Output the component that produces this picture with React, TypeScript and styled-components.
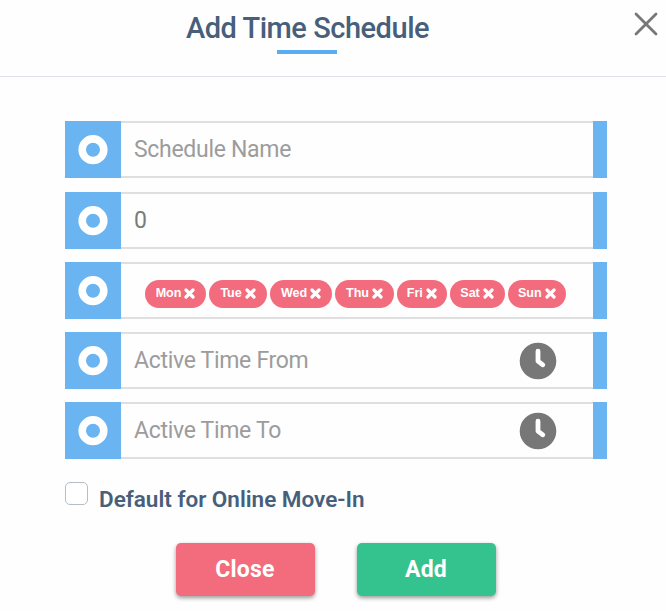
import React from "react";
import styled, { createGlobalStyle } from "styled-components";

const GlobalStyle = createGlobalStyle`
  *, *::before, *::after { box-sizing: border-box; }
  body { margin: 0; background: #fff; font-family: Roboto, sans-serif; }
`;

const Dialog = styled.section`
  width: 666px;
  height: 611px;
  overflow: hidden;
  background: #fefefe;
  color: #475f7b;
`;

const Header = styled.header`
  display: grid;
  grid-template-columns: 1fr 243px 1fr;
  height: 77px;
  padding-right: 51px;
  border-bottom: 1px solid #dfe3e7;
  position: relative;
`;

const TitleBlock = styled.div`
  grid-column: 2;
  display: flex;
  flex-direction: column;
  align-items: center;
`;

const Title = styled.h1`
  margin: 11px 0 0;
  font-size: 29px;
  font-weight: 500;
  line-height: 35px;
  letter-spacing: -0.47px;
  white-space: nowrap;
`;

const TitleRule = styled.span`
  width: 60px;
  height: 4px;
  margin: 4px 1px 0 0;
  background: #5badf2;
`;

const Dismiss = styled.button`
  position: absolute;
  top: 12px;
  right: 8px;
  display: flex;
  padding: 0;
  border: 0;
  background: none;
`;

const Fields = styled.div`
  display: flex;
  flex-direction: column;
  gap: 14px;
  margin: 44px 59px 0 65px;
`;

const Field = styled.div<{ $after?: number }>`
  display: flex;
  height: 57px;
  margin-bottom: ${(p) => p.$after ?? -1}px;
`;

const Marker = styled.div`
  display: flex;
  align-items: center;
  justify-content: center;
  width: 56px;
  background: #6ab4f1;
`;

const FieldBody = styled.div`
  display: flex;
  align-items: center;
  flex: 1;
  min-width: 0;
  border: solid #dfdfdf;
  border-width: 2px 0;
`;

const FieldEnd = styled.div`
  width: 14px;
  background: #6ab4f1;
`;

const Input = styled.input`
  flex: 1;
  min-width: 0;
  height: 100%;
  padding: 0 0 0 13px;
  border: 0;
  outline: 0;
  background: transparent;
  color: #7b7b7b;
  font: 400 23px Roboto, sans-serif;
  letter-spacing: -0.3px;
  &::placeholder { color: #9c9c9c; opacity: 1; }
`;

const ClockSlot = styled.span`
  display: flex;
  margin-right: 36px;
`;

const Tags = styled.div`
  display: flex;
  gap: 3px;
  padding: 6px 0 0 24px;
`;

const Tag = styled.span<{ $width: number }>`
  display: flex;
  align-items: center;
  justify-content: center;
  gap: 3px;
  width: ${(p) => p.$width}px;
  height: 28px;
  padding-bottom: 1px;
  border-radius: 14px;
  background: #f26c7d;
  color: #fff;
  font: 700 12.6px "Liberation Sans", Arial, sans-serif;
  letter-spacing: -0.1px;
`;

const DefaultOption = styled.label`
  display: flex;
  align-items: flex-start;
  gap: 11px;
  margin: 23px 0 0 65px;
  height: 61px;
`;

const Checkbox = styled.input`
  appearance: none;
  width: 23px;
  height: 23px;
  margin: 0;
  border: 1.5px solid #b7bdc5;
  border-radius: 5px;
  background: #fff;
`;

const OptionLabel = styled.span`
  padding-top: 3px;
  font-size: 22.5px;
  font-weight: 600;
  line-height: 28px;
  white-space: nowrap;
`;

const Actions = styled.footer`
  display: flex;
  gap: 42px;
  padding-left: 176px;
`;

const Action = styled.button<{ $color: string }>`
  width: 139px;
  height: 53px;
  padding: 0 1px 1px 0;
  border: 0;
  border-radius: 5px;
  background: ${(p) => p.$color};
  box-shadow: 0 2px 4px rgba(0, 0, 0, 0.4);
  color: #fff;
  font: 700 23px Roboto, sans-serif;
  letter-spacing: 0.2px;
`;

const Ring = () => (
  <svg width="30" height="30" viewBox="0 0 30 30">
    <circle cx="15" cy="14.7" r="10.8" fill="none" stroke="#fff" strokeWidth="7.6" />
  </svg>
);

const Clock = () => (
  <ClockSlot>
    <svg width="38" height="38" viewBox="0 0 38 38">
      <circle cx="19" cy="19" r="18.3" fill="#777" />
      <path d="M19 9.2V19.2L23.8 22.8" fill="none" stroke="#fff" strokeWidth="4.8" strokeLinecap="round" strokeLinejoin="round" />
    </svg>
  </ClockSlot>
);

const TagCross = () => (
  <svg width="11" height="12" viewBox="0 0 11 12">
    <path d="M2 3L9 10M9 3L2 10" stroke="#fff" strokeWidth="3.2" strokeLinecap="round" />
  </svg>
);

const days = [
  { name: "Mon", width: 61 },
  { name: "Tue", width: 58 },
  { name: "Wed", width: 62 },
  { name: "Thu", width: 59 },
  { name: "Fri", width: 49.5 },
  { name: "Sat", width: 55 },
  { name: "Sun", width: 58.5 },
];

function FormField({ children, after }: { children: React.ReactNode; after?: number }) {
  return (
    <Field $after={after}>
      <Marker><Ring /></Marker>
      <FieldBody>{children}</FieldBody>
      <FieldEnd />
    </Field>
  );
}

export default function App() {
  return (
    <>
      <GlobalStyle />
      <Dialog>
        <Header>
          <TitleBlock>
            <Title>Add Time Schedule</Title>
            <TitleRule />
          </TitleBlock>
          <Dismiss aria-label="Dismiss">
            <svg width="24" height="24" viewBox="0 0 24 24">
              <path d="M2 2L22 22M22 2L2 22" stroke="#777" strokeWidth="2.8" strokeLinecap="round" />
            </svg>
          </Dismiss>
        </Header>
        <Fields>
          <FormField after={0}><Input placeholder="Schedule Name" /></FormField>
          <FormField><Input defaultValue="0" /></FormField>
          <FormField>
            <Tags>
              {days.map((d) => (
                <Tag key={d.name} $width={d.width}>{d.name}<TagCross /></Tag>
              ))}
            </Tags>
          </FormField>
          <FormField><Input placeholder="Active Time From" /><Clock /></FormField>
          <FormField after={0}><Input placeholder="Active Time To" /><Clock /></FormField>
        </Fields>
        <DefaultOption>
          <Checkbox type="checkbox" />
          <OptionLabel>Default for Online Move-In</OptionLabel>
        </DefaultOption>
        <Actions>
          <Action $color="#f26c7d">Close</Action>
          <Action $color="#34c38f">Add</Action>
        </Actions>
      </Dialog>
    </>
  );
}
